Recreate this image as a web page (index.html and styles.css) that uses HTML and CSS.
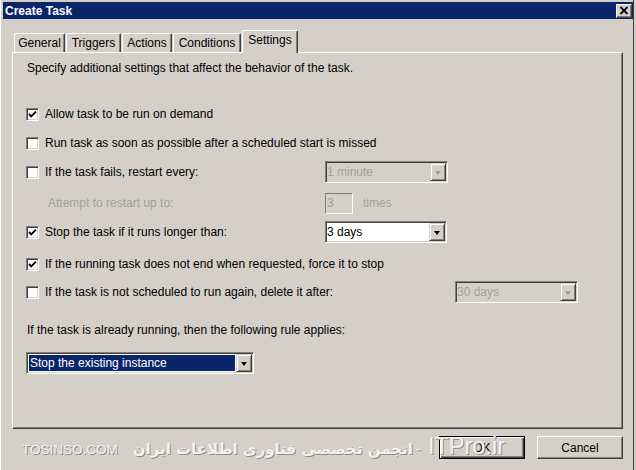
FILE: index.html
```html
<!DOCTYPE html>
<html lang="en">
<head>
    <meta charset="UTF-8">
    <meta name="viewport" content="width=device-width, initial-scale=1.0">
    <title>Create Task</title>
    <link rel="stylesheet" href="styles.css">
</head>
<body>
<div class="window">
    <div class="titlebar">
        <span class="title">Create Task</span>
        <button class="close-btn" aria-label="Close">
            <svg width="10" height="9" viewBox="0 0 10 9"><path d="M1.5 1 L8.5 8 M8.5 1 L1.5 8" stroke="#000" stroke-width="1.8" fill="none"/></svg>
        </button>
    </div>

    <div class="tabs">
        <div class="tab tab-general">General</div>
        <div class="tab tab-triggers">Triggers</div>
        <div class="tab tab-actions">Actions</div>
        <div class="tab tab-conditions">Conditions</div>
        <div class="tab tab-settings active">Settings</div>
    </div>

    <div class="panel">
        <p class="intro">Specify additional settings that affect the behavior of the task.</p>

        <div class="row first">
            <label class="option"><span class="check checked"><svg width="9" height="9" viewBox="0 0 9 9"><path d="M1 4 L3.2 6.4 L8 1.6" stroke="#000" stroke-width="1.9" fill="none"/></svg></span>Allow task to be run on demand</label>
        </div>

        <div class="row">
            <label class="option"><span class="check"></span>Run task as soon as possible after a scheduled start is missed</label>
        </div>

        <div class="row">
            <label class="option"><span class="check"></span>If the task fails, restart every:</label>
            <div class="combo disabled w-123"><span class="combo-text">1 minute</span><span class="combo-arrow"></span></div>
        </div>

        <div class="row wide">
            <span class="sub-label">Attempt to restart up to:</span>
            <div class="spin-group">
                <span class="textbox disabled">3</span>
                <span class="muted">times</span>
            </div>
        </div>

        <div class="row">
            <label class="option"><span class="check checked"><svg width="9" height="9" viewBox="0 0 9 9"><path d="M1 4 L3.2 6.4 L8 1.6" stroke="#000" stroke-width="1.9" fill="none"/></svg></span>Stop the task if it runs longer than:</label>
            <div class="combo w-122"><span class="combo-text">3 days</span><span class="combo-arrow"></span></div>
        </div>

        <div class="row wider">
            <label class="option span-2"><span class="check checked"><svg width="9" height="9" viewBox="0 0 9 9"><path d="M1 4 L3.2 6.4 L8 1.6" stroke="#000" stroke-width="1.9" fill="none"/></svg></span>If the running task does not end when requested, force it to stop</label>
        </div>

        <div class="row tight">
            <label class="option span-2"><span class="check"></span>If the task is not scheduled to run again, delete it after:</label>
            <div class="combo disabled w-123"><span class="combo-text">30 days</span><span class="combo-arrow"></span></div>
        </div>

        <p class="rule-label">If the task is already running, then the following rule applies:</p>

        <div class="combo rule-combo"><span class="combo-text selected">Stop the existing instance</span><span class="combo-arrow"></span></div>
    </div>

    <div class="footer">
        <div class="watermark"><span class="wm-site">TOSINSO.COM</span><span class="wm-fa">انجمن تخصصی فناوری اطلاعات ایران</span><span class="wm-dash">-</span><span class="wm-brand">ITPro.ir</span></div>
        <button class="btn btn-default">OK</button>
        <button class="btn">Cancel</button>
    </div>
</div>
</body>
</html>
```
FILE: styles.css
```css
body {
    margin: 0;
    background-color: #d4d0c8;
    font-family: "Liberation Sans", Arial, sans-serif;
    font-size: 12px;
    color: #000;
}
.window {
    width: 634px;
    height: 470px;
    box-sizing: border-box;
    padding: 2px 0 0 3px;
    border-right: 1px solid #404040;
    box-shadow: inset 1px 0 0 #ffffff;
    background-color: #d4d0c8;
    position: relative;
    overflow: hidden;
}
.titlebar {
    height: 17px;
    background-color: #0a246a;
    display: flex;
    align-items: center;
    justify-content: space-between;
    padding: 0 1px 0 2px;
}
.title {
    color: #fff;
    font-weight: bold;
    font-size: 12px;
}
.close-btn {
    width: 16px;
    height: 14px;
    padding: 0;
    background-color: #d4d0c8;
    border: 1px solid;
    border-color: #fff #404040 #404040 #fff;
    box-shadow: inset -1px -1px 0 #808080;
    display: flex;
    align-items: center;
    justify-content: center;
}

/* tabs */
.tabs {
    height: 33px;
    display: flex;
    align-items: flex-end;
    padding-left: 11px;
    gap: 1px;
}
.tab {
    height: 19px;
    box-sizing: border-box;
    border: 1px solid;
    border-bottom: none;
    border-color: #fff #404040 transparent #fff;
    box-shadow: inset -1px 0 0 #808080;
    border-radius: 2px 2px 0 0;
    text-align: center;
    line-height: 18px;
}
.tab-general { width: 51px; }
.tab-triggers { width: 55px; }
.tab-actions { width: 50px; }
.tab-conditions { width: 68px; }
.tab-settings { width: 56px; }
.tab.active {
    height: 23px;
    line-height: 19px;
    margin-bottom: -1px;
    position: relative;
    z-index: 1;
    background-color: #d4d0c8;
}

/* panel */
.panel {
    margin: 0 10px 0 9px;
    height: 377px;
    box-sizing: border-box;
    border: 1px solid;
    border-color: #fff #404040 #404040 #fff;
    box-shadow: inset -1px -1px 0 #808080;
    padding: 7px 0 0 13px;
}
.intro {
    margin: 0 0 0 1px;
    line-height: 16px;
}
.row {
    height: 22px;
    margin-top: 7px;
    display: grid;
    grid-template-columns: 299px 130px auto;
    align-items: center;
}
.row.first { margin-top: 27px; }
.row.wide { margin-top: 9px; }
.row.wider { margin-top: 10px; }
.row.tight { margin-top: 6px; }
.option {
    display: flex;
    align-items: center;
    gap: 6px;
    white-space: nowrap;
}
.span-2 { grid-column: 1 / 3; }
.check {
    width: 13px;
    height: 13px;
    box-sizing: border-box;
    background-color: #fff;
    border: 1px solid;
    border-color: #808080 #fff #fff #808080;
    box-shadow: inset 1px 1px 0 #404040, inset -1px -1px 0 #d4d0c8;
    display: flex;
    align-items: center;
    justify-content: center;
    flex-shrink: 0;
}
.sub-label {
    padding-left: 22px;
    color: #a0a0a0;
}
.muted {
    color: #a0a0a0;
}
.spin-group {
    display: flex;
    align-items: center;
    gap: 10px;
}
.textbox {
    width: 28px;
    height: 21px;
    box-sizing: border-box;
    border: 1px solid;
    border-color: #808080 #fff #fff #808080;
    padding-left: 1px;
    line-height: 19px;
    color: #a0a0a0;
}

/* combo boxes */
.combo {
    height: 22px;
    box-sizing: border-box;
    display: flex;
    align-items: stretch;
    background-color: #fff;
    border: 1px solid;
    border-color: #808080 #fff #fff #808080;
    box-shadow: inset 1px 1px 0 #404040, inset -1px -1px 0 #d4d0c8;
    padding: 1px;
}
.combo.disabled {
    background-color: #d4d0c8;
    color: #a0a0a0;
}
.w-122 { width: 122px; }
.w-123 { width: 123px; }
.combo-text {
    flex: 1;
    line-height: 18px;
    white-space: nowrap;
}
.combo-arrow {
    width: 16px;
    box-sizing: border-box;
    background-color: #d4d0c8;
    border: 1px solid;
    border-color: #d4d0c8 #404040 #404040 #d4d0c8;
    box-shadow: inset 1px 1px 0 #fff, inset -1px -1px 0 #808080;
    display: flex;
    align-items: center;
    justify-content: center;
}
.combo-arrow::before {
    content: "";
    border-left: 3.5px solid transparent;
    border-right: 3.5px solid transparent;
    border-top: 4px solid #000;
    margin-top: 1px;
}
.combo.disabled .combo-arrow::before {
    border-top-color: #a0a0a0;
}
.rule-label {
    margin: 19px 0 0 1px;
    line-height: 16px;
}
.rule-combo {
    width: 228px;
    margin-top: 14px;
}
.combo-text.selected {
    background-color: #0a246a;
    color: #fff;
    margin: 1px 1px 1px 1px;
    padding-left: 1px;
    line-height: 16px;
}

/* footer */
.footer {
    position: relative;
    display: flex;
    justify-content: flex-end;
    gap: 12px;
    margin: 7px 10px 0 0;
}
.btn {
    width: 86px;
    height: 23px;
    font-family: inherit;
    font-size: 12px;
    background-color: #d4d0c8;
    border: 1px solid;
    border-color: #fff #404040 #404040 #fff;
    box-shadow: inset -1px -1px 0 #808080;
    padding: 0;
}
.btn-default {
    border-color: #000;
    box-shadow: inset 1px 1px 0 #fff, inset -1px -1px 0 #404040, inset -2px -2px 0 #808080;
}
.watermark {
    position: absolute;
    left: 19px;
    top: -2px;
    z-index: 2;
    white-space: nowrap;
    line-height: 24px;
    color: #f2f2f2;
    text-shadow: 1px 1px 0 #8c8c8c;
    pointer-events: none;
}
.wm-site {
    font-size: 13.5px;
}
.wm-fa {
    font-family: "DejaVu Sans", sans-serif;
    font-size: 15px;
    font-weight: bold;
    margin-left: 15px;
}
.wm-dash {
    font-size: 15px;
    margin-left: 3px;
}
.wm-brand {
    font-size: 23.5px;
    margin-left: 7px;
}
```
